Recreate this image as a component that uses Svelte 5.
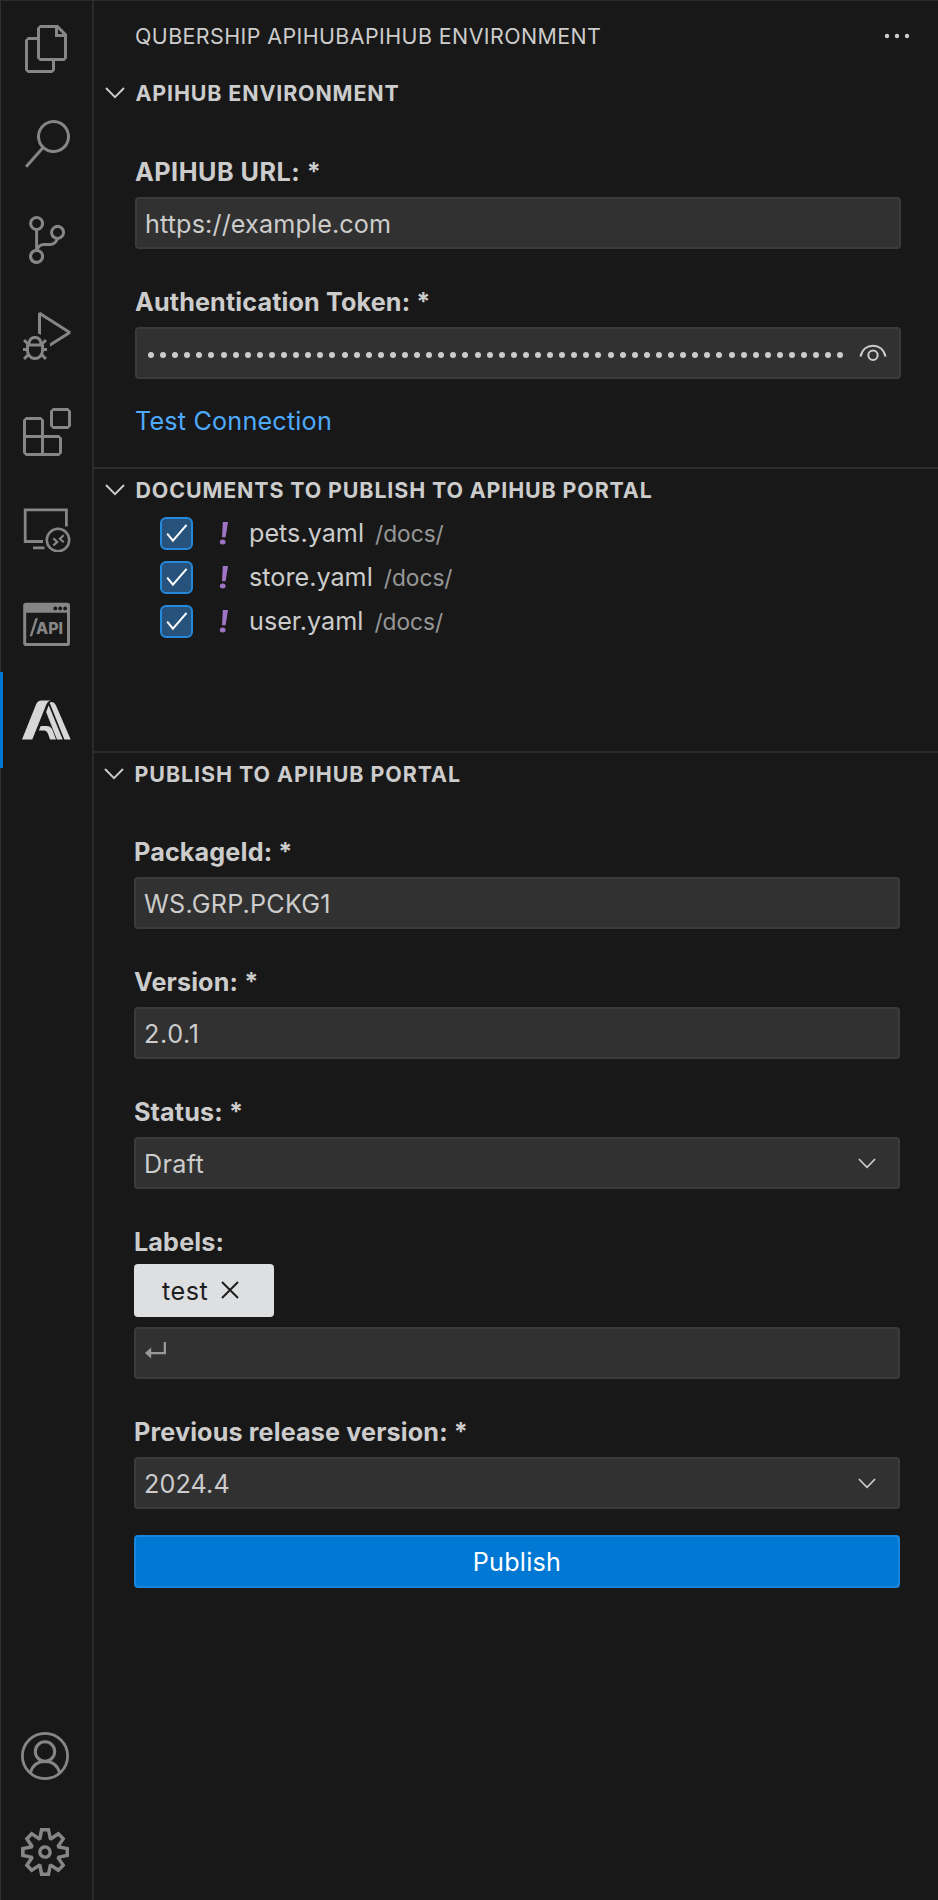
<script>
  const files = [
    { name: 'pets.yaml', dir: '/docs/' },
    { name: 'store.yaml', dir: '/docs/' },
    { name: 'user.yaml', dir: '/docs/' }
  ];
  const token = Array.from({ length: 58 });
</script>

{#snippet chevron(cls)}
  <svg class={cls} width="20" height="12" viewBox="0 0 20 12"><path d="M1 1l9 9.2L19 1" /></svg>
{/snippet}

{#snippet heading(text)}
  <div class="heading">
    {@render chevron('chev')}
    <h2>{text}</h2>
  </div>
{/snippet}

<div class="app">
  <nav class="activity">
    <div class="item"><svg width="48" height="48" viewBox="0 0 24 24"><path d="M17.5 0h-9L7 1.5V6H2.5L1 7.5v15.07L2.5 24h12.07L16 22.57V18h4.7l1.3-1.43V4.5L17.5 0zm0 2.12l2.38 2.38H17.5V2.12zm-3 20.38h-12v-15H7v9.07L8.5 18h6v4.5zm6-6h-12v-15H16V6h4.5v10.5z" /></svg></div>
    <div class="item"><svg width="48" height="48" viewBox="0 0 24 24"><path d="M15.25 0a8.25 8.25 0 0 0-6.18 13.72L1 22.88l1.12 1 8.05-9.12A8.251 8.251 0 1 0 15.25.01V0zm0 15a6.75 6.75 0 1 1 0-13.5 6.75 6.75 0 0 1 0 13.5z" /></svg></div>
    <div class="item"><svg width="48" height="48" viewBox="0 0 24 24"><path d="M21.007 8.222A3.738 3.738 0 0 0 15.045 5.2a3.737 3.737 0 0 0 1.156 6.583 2.988 2.988 0 0 1-2.668 1.67h-2.99a4.456 4.456 0 0 0-2.989 1.165V7.4a3.737 3.737 0 1 0-1.494 0v9.117a3.776 3.776 0 1 0 1.816.099 2.99 2.99 0 0 1 2.668-1.667h2.99a4.484 4.484 0 0 0 4.223-3.039 3.736 3.736 0 0 0 3.25-3.687zM4.565 3.738a2.242 2.242 0 1 1 4.484 0 2.242 2.242 0 0 1-4.484 0zm4.484 16.441a2.242 2.242 0 1 1-4.484 0 2.242 2.242 0 0 1 4.484 0zm8.221-9.715a2.242 2.242 0 1 1 0-4.485 2.242 2.242 0 0 1 0 4.485z" /></svg></div>
    <div class="item"><svg width="48" height="48" viewBox="0 0 24 24"><path d="M10.94 13.5l-1.32 1.32a3.73 3.73 0 0 0-7.24 0L1.06 13.5 0 14.56l1.72 1.72-.22.22V18H0v1.5h1.5v.08c.077.489.214.966.41 1.42L0 22.94 1.06 24l1.65-1.65A4.308 4.308 0 0 0 6 24a4.31 4.31 0 0 0 3.29-1.65L10.94 24 12 22.94 10.09 21c.198-.464.336-.951.41-1.45v-.1H12V18h-1.5v-1.5l-.22-.22L12 14.56l-1.06-1.06zM6 13.5a2.25 2.25 0 0 1 2.25 2.25h-4.5A2.25 2.25 0 0 1 6 13.5zm3 6a3.33 3.33 0 0 1-3 3 3.33 3.33 0 0 1-3-3v-2.25h6v2.25zm14.76-9.9v1.26L13.5 17.37V15.6l8.5-5.37L9 2v9.46a5.07 5.07 0 0 0-1.5-.72V.63L8.64 0l15.12 9.6z" /></svg></div>
    <div class="item"><svg width="48" height="48" viewBox="0 0 24 24"><path d="M13.5 1.5L15 0h7.5L24 1.5V9l-1.5 1.5H15L13.5 9V1.5zm1.5 0V9h7.5V1.5H15zM0 15V6l1.5-1.5H9L10.5 6v7.5H18l1.5 1.5v7.5L18 24H1.5L0 22.5V15zm9-1.5V6H1.5v7.5H9zM9 15H1.5v7.5H9V15zm1.5 7.5H18V15h-7.5v7.5z" /></svg></div>
    <div class="item">
      <svg class="line" width="48" height="48" viewBox="0 0 48 48">
        <path d="M43.4 22.5V5.8H2.2v31.7H20M10 43.8h11.5" stroke-width="2.8" />
        <circle cx="35" cy="36" r="11.2" stroke-width="2.6" />
        <path d="M30.3 34.3l3.9 3.6-3.9 3.6M40.8 31.2l-3.900 3.500 3.900 3.500" stroke-width="2.2" />
      </svg>
    </div>
    <div class="item">
      <svg width="48" height="48" viewBox="0 0 48 48">
        <path fill-rule="evenodd" d="M3 2.7h41.2a2.8 2.8 0 0 1 2.8 2.8v37.8a2.8 2.8 0 0 1-2.8 2.8H3a2.8 2.8 0 0 1-2.8-2.8V5.5A2.8 2.8 0 0 1 3 2.7zM3.2 12.8v30.3H44V12.8z" />
        <g fill="#181818"><circle cx="32.3" cy="8.4" r="1.9" /><circle cx="37.2" cy="8.4" r="1.9" /><circle cx="42.1" cy="8.4" r="1.9" /></g>
        <path d="M6.600 36.300h2.500l5.800-18h-2.500z" />
        <text x="13" y="34.300" textLength="27" lengthAdjust="spacingAndGlyphs">API</text>
      </svg>
    </div>
    <div class="item active">
      <svg width="50" height="48" viewBox="0 0 50 48">
        <path d="M0 43.6L14 8.4Q15.600 4.600 19.700 4.600H28.600Q25.600 5.200 24.300 8.400L10.300 43.600z" />
        <path d="M18.700 29.900H24.500Q28.900 29.900 30.400 33.700L34 43.600H28L26.200 38.300Q25 34.500 21.800 34.500H16.900z" />
        <path d="M26.700 9.300L40.700 43.600H35L24.100 16z" />
        <path d="M27.700 7Q28.900 5.300 31 6.200Q33 7 34 9.400L48.700 43.600H42.400z" />
      </svg>
    </div>
    <div class="spacer"></div>
    <div class="item low">
      <svg class="line" width="48" height="48" viewBox="0 0 48 48">
        <circle cx="24" cy="24" r="22.600" stroke-width="2.8" />
        <circle cx="24" cy="19.500" r="9.700" stroke-width="3" />
        <path d="M9.500 40.500C11.500 33.500 17 29.500 24 29.500S36.500 33.500 38.500 40.500" stroke-width="3" />
      </svg>
    </div>
    <div class="item low"><svg width="48" height="48" viewBox="0 0 24 24"><path d="M19.85 8.75l4.15.83v4.84l-4.15.83 2.35 3.52-3.43 3.43-3.52-2.35-.83 4.15H9.58l-.83-4.15-3.52 2.35-3.43-3.43 2.35-3.52L0 14.42V9.58l4.15-.83L1.8 5.23 5.23 1.8l3.52 2.35L9.58 0h4.84l.83 4.15 3.52-2.35 3.43 3.43-2.35 3.52zm-1.57 5.07l4-.81v-2l-4-.81-.54-1.3 2.29-3.43-1.43-1.43-3.43 2.29-1.3-.54-.81-4h-2l-.81 4-1.3.54-3.43-2.29-1.43 1.43L6.38 8.9l-.54 1.3-4 .81v2l4 .81.54 1.3-2.29 3.43 1.43 1.43 3.43-2.29 1.3.54.81 4h2l.81-4 1.3-.54 3.43 2.29 1.43-1.43-2.29-3.43.54-1.3zm-8.186-4.672A3.43 3.43 0 0 1 12 8.57 3.44 3.44 0 0 1 15.43 12a3.43 3.43 0 1 1-5.336-2.852zm.956 4.274c.281.188.612.288.95.288A1.7 1.7 0 0 0 13.71 12a1.71 1.71 0 1 0-2.66 1.422z" /></svg></div>
  </nav>

  <main class="panel">
    <header class="title">
      <span>QUBERSHIP APIHUBAPIHUB ENVIRONMENT</span>
      <svg width="26" height="6" viewBox="0 0 26 6"><circle cx="3" cy="3" r="2.2" /><circle cx="13" cy="3" r="2.2" /><circle cx="23" cy="3" r="2.2" /></svg>
    </header>

    <section class="env">
      {@render heading('APIHUB ENVIRONMENT')}
      <div class="form">
        <div class="field"><span class="label url">APIHUB URL: *</span><div class="box"><span class="value">https://example.com</span></div></div>
        <div class="field">
          <span class="label">Authentication Token: *</span>
          <div class="box">
            <div class="dots">{#each token as _}<i></i>{/each}</div>
            <svg class="eye" width="28" height="18" viewBox="0 0 28 18"><path d="M1.500 12.600C3 5.500 8 1.700 14 1.700S25 5.500 26.500 12.600" /><circle cx="14" cy="11.300" r="4.700" /></svg>
          </div>
        </div>
        <a class="link" href="#test">Test Connection</a>
      </div>
    </section>

    <section class="docs">
      {@render heading('DOCUMENTS TO PUBLISH TO APIHUB PORTAL')}
      {#each files as f}
        <div class="row">
          <span class="check"><svg width="22" height="20" viewBox="0 0 22 20"><path d="M1.200 10.600L6.900 17.600L20.600 1.800" /></svg></span>
          <svg class="bang" width="10" height="24" viewBox="0 0 10 24"><path d="M3.800 1H9L6.600 16.200H3z" /><ellipse cx="3.700" cy="20.900" rx="2.900" ry="2.500" /></svg>
          <span class="name">{f.name}</span>
          <span class="dir">{f.dir}</span>
        </div>
      {/each}
    </section>

    <section class="publish">
      {@render heading('PUBLISH TO APIHUB PORTAL')}
      <div class="form">
        <div class="field"><span class="label">PackageId: *</span><div class="box"><span class="value package">WS.GRP.PCKG1</span></div></div>
        <div class="field"><span class="label">Version: *</span><div class="box"><span class="value version">2.0.1</span></div></div>
        <div class="field"><span class="label">Status: *</span><div class="box"><span class="value status">Draft</span>{@render chevron('drop')}</div></div>
        <div class="field labels">
          <span class="label">Labels:</span>
          <div class="chip"><span>test</span><svg width="18" height="18" viewBox="0 0 18 18"><path d="M1 1l16 16M17 1L1 17" /></svg></div>
          <div class="box"><svg class="enter" width="22" height="17" viewBox="0 0 22 17"><path d="M0 11L6.200 5.600V16.400z" /><path d="M5 10H18.700V0H21V12.200H5z" /></svg></div>
        </div>
        <div class="field"><span class="label">Previous release version: *</span><div class="box"><span class="value">2024.4</span>{@render chevron('drop')}</div></div>
        <button>Publish</button>
      </div>
    </section>
  </main>
</div>

<style>
  :global(body) { background: #181818; }
  .app {
    display: flex;
    width: 938px;
    height: 1900px;
    box-sizing: border-box;
    border-top: 1px solid #2b2b2b;
    border-left: 1px solid #303030;
    background: #181818;
    color: #cccccc;
    font-family: Inter, "Liberation Sans", sans-serif;
    font-size: 25.2px;
  }
  .activity { width: 91px; flex: none; display: flex; flex-direction: column; border-right: 2px solid #2b2b2b; }
  .item { height: 96px; flex: none; display: flex; align-items: center; padding-left: 22px; }
  .item:first-child { height: 95px; }
  .item svg { fill: #868686; display: block; }
  .item svg.line { fill: none; stroke: #868686; }
  .item text { font: 800 16.500px Inter, sans-serif; }
  .item.low { padding-left: 20px; }
  .item.active { border-left: 3px solid #0078d4; margin-left: -1px; padding-left: 19px; }
  .item.active svg { fill: #d7d7d7; }
  .spacer { flex: 1; }

  .panel { flex: 1; min-width: 0; display: flex; flex-direction: column; }
  .title { height: 70px; display: flex; align-items: center; justify-content: space-between; box-sizing: border-box; padding: 0 28px 0 41px; font-size: 21.400px; letter-spacing: 0.430px; }
  .title svg { fill: #cccccc; }
  .heading { display: flex; align-items: center; height: 43px; padding-left: 11px; gap: 10.500px; }
  .heading h2 { margin: 0; font-size: 21.400px; font-weight: 700; line-height: 28px; letter-spacing: 0.880px; white-space: nowrap; }
  .docs .heading, .publish .heading { margin-top: -1px; }
  .publish .heading { padding-left: 10px; }
  .publish h2 { letter-spacing: 0.960px; }
  .chev, .drop { fill: none; stroke: #cccccc; stroke-width: 1.900; }
  .env { height: 396px; }
  .docs { height: 282px; border-top: 2px solid #2b2b2b; }
  .publish { border-top: 2px solid #2b2b2b; }
  .form { display: flex; flex-direction: column; padding: 41px 37px 0 41px; gap: 36px; }
  .publish .form { padding: 40px 38px 0 40px; }
  .field { display: flex; flex-direction: column; gap: 8px; }
  .label { align-self: flex-start; font-weight: 700; line-height: 34px; letter-spacing: 0.130px; }
  .label.url { letter-spacing: 0.500px; }
  .box { display: flex; align-items: center; height: 52px; box-sizing: border-box; border: 2px solid #3b3b3b; border-radius: 4px; background: #313131; padding: 0 22px 0 8px; }
  .value { margin-top: 2px; letter-spacing: 0.120px; }
  .package { letter-spacing: 0.200px; }
  .version { letter-spacing: 0.600px; }
  .status { letter-spacing: 0.300px; }
  .drop { width: 18px; height: 11px; margin-left: auto; }
  .dots { display: flex; flex: none; width: 698px; gap: 6.100px; overflow: hidden; padding-left: 3px; box-sizing: border-box; margin-top: 4px; }
  .dots i { flex: none; width: 6px; height: 6px; border-radius: 50%; background: #cccccc; }
  .eye { fill: none; stroke: #cccccc; stroke-width: 2; margin-left: 16px; margin-top: -1px; flex: none; }
  .link { color: #4daafc; text-decoration: none; line-height: 34px; letter-spacing: 0.180px; margin-top: -11px; align-self: flex-start; }
  .row { display: flex; align-items: center; height: 44px; padding-left: 66px; }
  .check { width: 33px; height: 33px; box-sizing: border-box; display: flex; align-items: center; justify-content: center; border: 2px solid #2488db; border-radius: 6px; background: #26527b; }
  .check svg { fill: none; stroke: #ffffff; stroke-width: 2; }
  .bang { fill: #a074c4; margin-left: 26px; }
  .name { margin-left: 20px; }
  .dir { margin-left: 11px; font-size: 22.700px; opacity: 0.7; }
  .labels { gap: 0; }
  .chip { align-self: flex-start; display: flex; align-items: center; box-sizing: border-box; padding-left: 28px; gap: 12.500px; width: 140px; height: 53px; margin: 5px 0 10px; border-radius: 4px; background: #dddfe1; color: #1e1e1e; letter-spacing: 0.500px; }
  .chip svg { stroke: #1e1e1e; stroke-width: 2; margin-top: -1px; }
  .enter { fill: #989898; margin-left: 1px; margin-top: -5px; }
  button { height: 53px; margin-top: -10px; border: 2px solid #1a85dc; border-radius: 4px; background: #0078d4; color: #ffffff; font: inherit; letter-spacing: 0.250px; }
</style>
